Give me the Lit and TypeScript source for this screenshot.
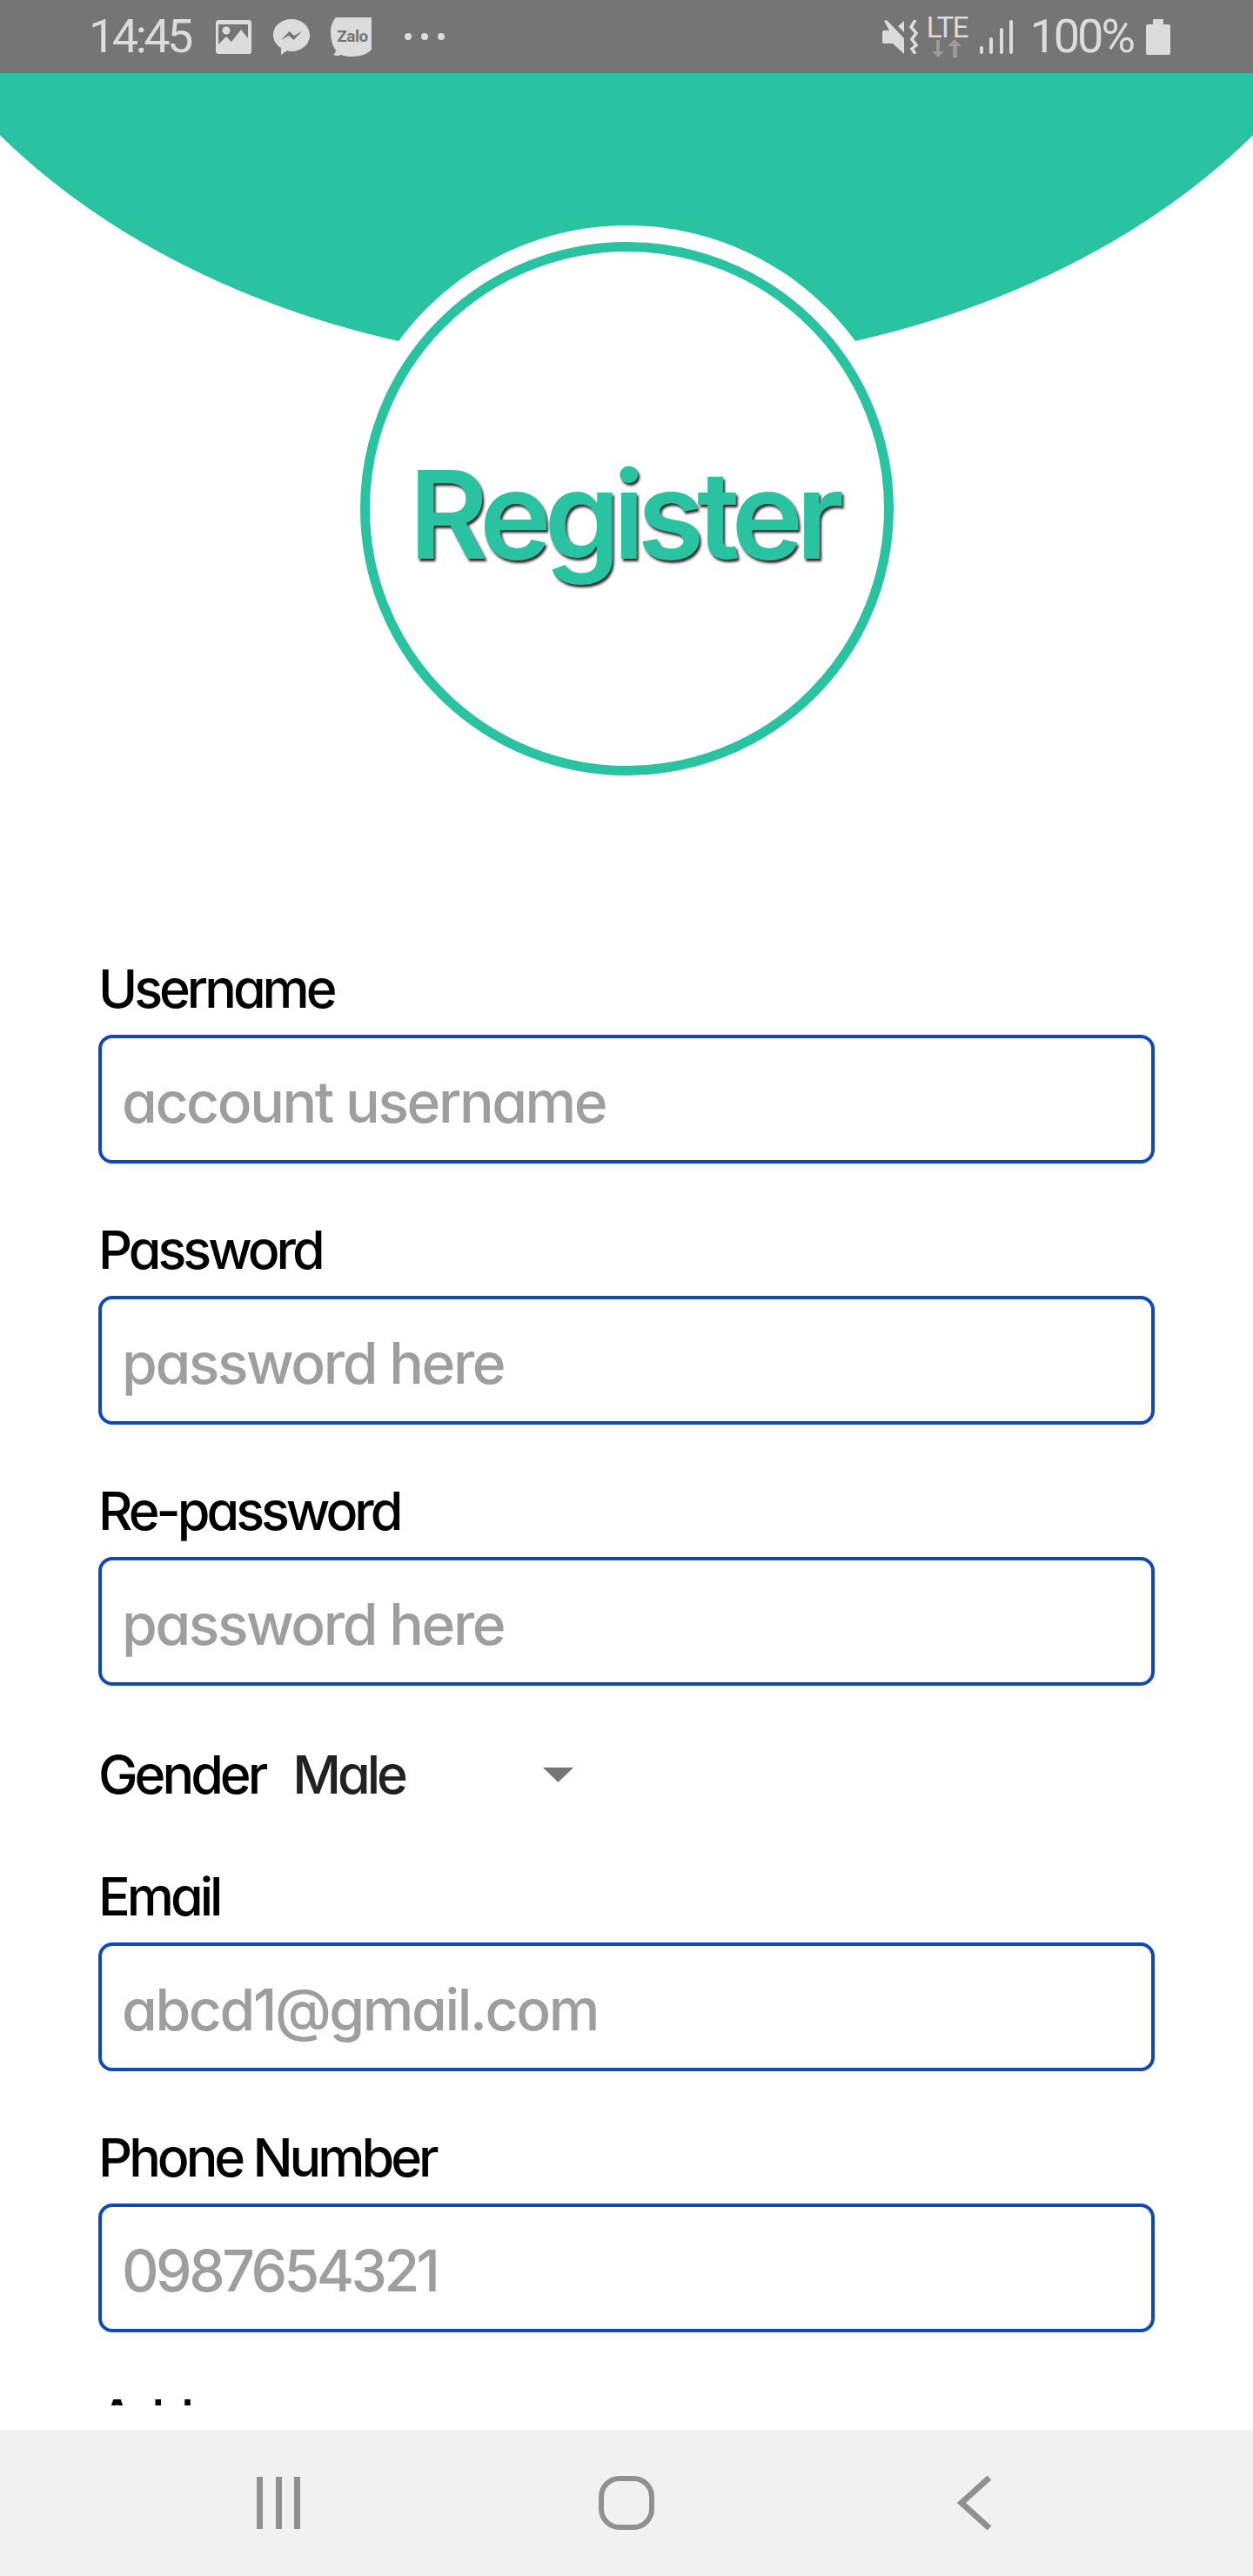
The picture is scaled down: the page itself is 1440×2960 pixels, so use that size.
import { LitElement, html, css, svg } from 'lit';
import { customElement } from 'lit/decorators.js';
import { classMap } from 'lit/directives/class-map.js';

type Field = { label: string; placeholder: string; digits?: boolean };

const TOP_FIELDS: Field[] = [
  { label: 'Username', placeholder: 'account username' },
  { label: 'Password', placeholder: 'password here' },
  { label: 'Re-password', placeholder: 'password here' },
];

const BOTTOM_FIELDS: Field[] = [
  { label: 'Email', placeholder: 'abcd1@gmail.com' },
  { label: 'Phone Number', placeholder: '0987654321', digits: true },
];

const signalBars = [
  { x: 0, y: 30, h: 9 },
  { x: 11, y: 20, h: 19 },
  { x: 23, y: 9, h: 30 },
  { x: 34, y: 0, h: 39 },
];

@customElement('app-root')
export class AppRoot extends LitElement {
  static styles = css`
    :host {
      display: block;
      font-family: Inter, 'Noto Sans', sans-serif;
      font-feature-settings: 'cv11' 1;
    }
    .screen {
      display: flex;
      flex-direction: column;
      height: 2960px;
      background: #fff;
    }

    .status {
      flex: none;
      display: flex;
      align-items: center;
      height: 84px;
      padding: 0 95px 0 102px;
      box-sizing: border-box;
      background: #757575;
      color: #dcdcdc;
      font-family: Roboto, sans-serif;
      font-size: 54px;
      line-height: 84px;
    }
    .status svg {
      display: block;
      flex: none;
      fill: #dcdcdc;
    }
    .time {
      width: 118px;
      letter-spacing: -3.5px;
      white-space: nowrap;
      margin-right: 28px;
    }
    .spacer {
      flex: 1;
    }
    .lte {
      display: flex;
      flex-direction: column;
      align-items: center;
      width: 52px;
      margin-right: 12px;
      font-size: 33px;
      letter-spacing: -1.5px;
      line-height: 26px;
    }
    .pct {
      letter-spacing: -3px;
      margin: 0 15px 0 19px;
      white-space: nowrap;
    }

    main {
      flex: 1;
      min-height: 0;
      overflow: hidden;
    }
    .hero {
      display: flex;
      justify-content: center;
      height: 1016px;
      padding-top: 194px;
      box-sizing: border-box;
      background: radial-gradient(ellipse 900px 663px at 720px -326px, #2ac3a1 99.9%, transparent 100%);
    }
    .badge {
      display: flex;
      align-items: center;
      justify-content: center;
      width: 613px;
      height: 613px;
      box-sizing: border-box;
      border: 11px solid #2ac3a1;
      border-radius: 50%;
      background: #fff;
      box-shadow: 0 0 0 19px #fff;
    }
    h1 {
      margin: 0 8px 0 0;
      padding-top: 12px;
      color: #2ac3a1;
      font-size: 140px;
      font-weight: 600;
      letter-spacing: -8.5px;
      line-height: 1;
      text-shadow: 2px 3px 3px rgba(0, 0, 0, 0.85);
    }

    form {
      display: flex;
      flex-direction: column;
      gap: 63px;
      padding: 0 113px;
    }
    .field {
      display: flex;
      flex-direction: column;
      gap: 17px;
    }
    label,
    .gender-label {
      color: #000;
      font-size: 61px;
      font-weight: 500;
      letter-spacing: -4px;
      line-height: 72px;
    }
    input {
      display: block;
      width: 100%;
      height: 148px;
      box-sizing: border-box;
      padding: 6px 23px 0;
      border: 4px solid #1148b8;
      border-radius: 16px;
      background: #fff;
      color: #212121;
      font: inherit;
      font-size: 66px;
      font-weight: 500;
      letter-spacing: -2.4px;
      outline: none;
    }
    input.digits {
      letter-spacing: -3.5px;
    }
    input::placeholder {
      color: #9e9e9e;
      opacity: 1;
    }
    .gender {
      display: flex;
      align-items: center;
      margin: 3px 0 5px;
    }
    .gender-value {
      width: 288px;
      margin-left: 32px;
      color: #212121;
      font-size: 61px;
      font-weight: 500;
      letter-spacing: -4px;
      line-height: 72px;
    }
    .gender svg {
      fill: #757575;
    }

    .nav {
      flex: none;
      display: grid;
      grid-template-columns: repeat(3, 400px);
      justify-content: center;
      align-items: center;
      justify-items: center;
      height: 168px;
      margin-top: 28px;
      background: #f1f1f1;
    }
    .nav svg {
      display: block;
      fill: none;
      stroke: #909090;
    }
  `;

  private statusIcons() {
    return html`
      <svg width="41" height="39" viewBox="0 0 41 39" style="margin-right:25px">
        <path fill-rule="evenodd" d="M3 0h35a3 3 0 0 1 3 3v33a3 3 0 0 1-3 3H3a3 3 0 0 1-3-3V3a3 3 0 0 1 3-3zM3 5v23l9-9 6 6 11-14 8 10V5z" />
        <circle cx="12" cy="12" r="4.5" />
      </svg>
      <svg width="42" height="41" viewBox="0 0 42 41" style="margin-right:24px">
        <path fill-rule="evenodd" d="M21 0c11.600 0 21 8 21 18.500S32.600 37 21 37c-2 0-3.800-.2-5.500-.7L9 41v-8C3.500 29.600 0 24.500 0 18.500 0 8 9.400 0 21 0zM9 24l9.500-10 5.500 5 9-5-9.500 10-5.500-5z" />
      </svg>
      <svg width="47" height="45" viewBox="0 0 47 45" style="margin-right:38px">
        <path d="M6 0h41v37q-8 8-22 8-8 0-13-2-5 2-9 0 3-2 3-5Q0 30 0 16 0 7 6 0z" />
        <text x="25" y="28" text-anchor="middle" font-family="Roboto, sans-serif" font-size="19" font-weight="700" letter-spacing="-.5" fill="#757575">Zalo</text>
      </svg>
      <svg width="46" height="10" viewBox="0 0 46 10">
        <circle cx="4" cy="5" r="4" />
        <circle cx="23" cy="5" r="4" />
        <circle cx="42" cy="5" r="4" />
      </svg>
    `;
  }

  private networkIcons() {
    return html`
      <svg width="42" height="39" viewBox="0 0 42 39" style="margin-right:6px">
        <path d="M2 1L5 0 25 21V39L12 27H2Q0 27 0 25V14Q0 12 2 12H8zM25 1V14L18 7z" />
        <path d="M38 0L33 8l6 7-5 7 5 7-5 4 4 6" fill="none" stroke="#dcdcdc" stroke-width="3.500" />
      </svg>
      <div class="lte">
        <span>LTE</span>
        <svg width="36" height="21" viewBox="0 0 36 21">
          <path d="M6 1h4v13h5l-7 7-7-7h5zM27 0l8 8h-5v13h-5V8h-6z" fill="#9a9a9a" />
        </svg>
      </div>
      <svg width="38" height="39" viewBox="0 0 38 39">
        ${signalBars.map((b) => svg`<rect x=${b.x} y=${b.y} width="4" height=${b.h} rx="2" />`)}
      </svg>
    `;
  }

  render() {
    return html`
      <div class="screen">
        <div class="status">
          <span class="time">14:45</span>
          ${this.statusIcons()}
          <span class="spacer"></span>
          ${this.networkIcons()}
          <span class="pct">100%</span>
          <svg width="28" height="41" viewBox="0 0 28 41">
            <path d="M8 0h12v6h6a2 2 0 0 1 2 2v31a2 2 0 0 1-2 2H2a2 2 0 0 1-2-2V8a2 2 0 0 1 2-2h6z" />
          </svg>
        </div>

        <main>
          <div class="hero">
            <div class="badge"><h1>Register</h1></div>
          </div>
          <form>
            ${TOP_FIELDS.map((f) => this.renderField(f))}
            <div class="gender">
              <span class="gender-label">Gender</span>
              <span class="gender-value">Male</span>
              <svg width="35" height="17" viewBox="0 0 35 17"><path d="M0 0h35L17.500 17z" /></svg>
            </div>
            ${BOTTOM_FIELDS.map((f) => this.renderField(f))}
            ${this.renderField({ label: 'Address', placeholder: '' })}
          </form>
        </main>

        <nav class="nav">
          <svg width="50" height="60" viewBox="0 0 50 60" stroke-width="7">
            <path d="M3.500 0v60M25.500 0v60M46.500 0v60" />
          </svg>
          <svg width="64" height="62" viewBox="0 0 64 62" stroke-width="6">
            <rect x="3" y="3" width="58" height="56" rx="21" />
          </svg>
          <svg width="42" height="64" viewBox="0 0 42 64" stroke-width="7">
            <path d="M38 3L6 32l32 29" />
          </svg>
        </nav>
      </div>
    `;
  }

  private renderField(f: Field) {
    return html`
      <div class="field">
        <label>${f.label}</label>
        <input class=${classMap({ digits: !!f.digits })} type="text" placeholder=${f.placeholder} />
      </div>
    `;
  }
}
